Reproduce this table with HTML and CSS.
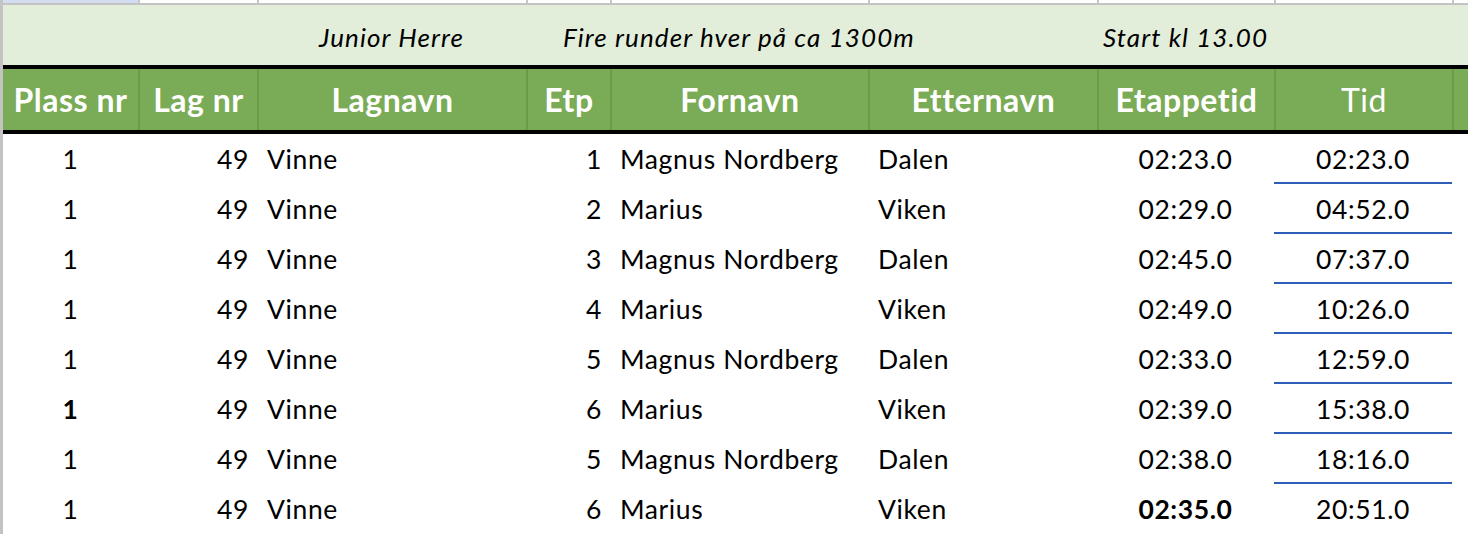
FILE: index.html
```html
<!DOCTYPE html>
<html lang="no">
<head>
<meta charset="utf-8">
<title>Junior Herre</title>
<link rel="stylesheet" href="styles.css">
</head>
<body>
<div class="sheet">
  <div class="gutter"></div>
  <div class="main">
    <div class="row toprow">
      <div class="c sel"></div><div class="c"></div><div class="c"></div><div class="c"></div><div class="c"></div><div class="c"></div><div class="c"></div><div class="c"></div><div class="c"></div>
    </div>
    <div class="row titlerow">
      <div class="c"></div><div class="c"></div>
      <div class="c t">Junior Herre</div>
      <div class="c"></div>
      <div class="c t">Fire runder hver på ca 1300m</div>
      <div class="c"></div>
      <div class="c t">Start kl 13.00</div>
      <div class="c"></div><div class="c"></div>
    </div>
    <div class="row headrow">
      <div class="c">Plass nr</div>
      <div class="c">Lag nr</div>
      <div class="c">Lagnavn</div>
      <div class="c">Etp</div>
      <div class="c">Fornavn</div>
      <div class="c">Etternavn</div>
      <div class="c">Etappetid</div>
      <div class="c reg">Tid</div>
      <div class="c"></div>
    </div>
    <div class="body">
      <div class="row drow"><div class="c ctr">1</div><div class="c rt">49</div><div class="c lt">Vinne</div><div class="c rt">1</div><div class="c lt">Magnus Nordberg</div><div class="c lt">Dalen</div><div class="c ctr">02:23.0</div><div class="c ctr tid">02:23.0</div><div class="c"></div></div>
      <div class="row drow"><div class="c ctr">1</div><div class="c rt">49</div><div class="c lt">Vinne</div><div class="c rt">2</div><div class="c lt">Marius</div><div class="c lt">Viken</div><div class="c ctr">02:29.0</div><div class="c ctr tid">04:52.0</div><div class="c"></div></div>
      <div class="row drow"><div class="c ctr">1</div><div class="c rt">49</div><div class="c lt">Vinne</div><div class="c rt">3</div><div class="c lt">Magnus Nordberg</div><div class="c lt">Dalen</div><div class="c ctr">02:45.0</div><div class="c ctr tid">07:37.0</div><div class="c"></div></div>
      <div class="row drow"><div class="c ctr">1</div><div class="c rt">49</div><div class="c lt">Vinne</div><div class="c rt">4</div><div class="c lt">Marius</div><div class="c lt">Viken</div><div class="c ctr">02:49.0</div><div class="c ctr tid">10:26.0</div><div class="c"></div></div>
      <div class="row drow"><div class="c ctr">1</div><div class="c rt">49</div><div class="c lt">Vinne</div><div class="c rt">5</div><div class="c lt">Magnus Nordberg</div><div class="c lt">Dalen</div><div class="c ctr">02:33.0</div><div class="c ctr tid">12:59.0</div><div class="c"></div></div>
      <div class="row drow"><div class="c ctr b">1</div><div class="c rt">49</div><div class="c lt">Vinne</div><div class="c rt">6</div><div class="c lt">Marius</div><div class="c lt">Viken</div><div class="c ctr">02:39.0</div><div class="c ctr tid">15:38.0</div><div class="c"></div></div>
      <div class="row drow"><div class="c ctr">1</div><div class="c rt">49</div><div class="c lt">Vinne</div><div class="c rt">5</div><div class="c lt">Magnus Nordberg</div><div class="c lt">Dalen</div><div class="c ctr">02:38.0</div><div class="c ctr tid">18:16.0</div><div class="c"></div></div>
      <div class="row drow"><div class="c ctr">1</div><div class="c rt">49</div><div class="c lt">Vinne</div><div class="c rt">6</div><div class="c lt">Marius</div><div class="c lt">Viken</div><div class="c ctr b">02:35.0</div><div class="c ctr">20:51.0</div><div class="c"></div></div>
    </div>
  </div>
</div>
</body>
</html>
```

FILE: styles.css
```css
html, body {
  margin: 0;
  padding: 0;
  background: #ffffff;
}

body {
  font-family: Lato, "Open Sans", sans-serif;
  color: #000;
  overflow: hidden;
}

.sheet {
  display: flex;
  height: 534px;
}

.gutter {
  width: 3px;
  flex: none;
  background: #c3c3c3;
}

.main {
  flex: 1;
  display: flex;
  flex-direction: column;
}

.row {
  display: grid;
  grid-template-columns: 135px 119px 269px 84px 258px 229px 177px 178px 1fr;
}

.c {
  box-sizing: border-box;
  min-width: 0;
  white-space: nowrap;
}

/* top (partial) spreadsheet row */
.toprow {
  height: 3px;
  border-bottom: 2px solid #c3c3c3;
}
.toprow .c + .c {
  border-left: 2px solid #c6c6c6;
}
.toprow .sel {
  background: #d3dcf1;
}

/* title row */
.titlerow {
  height: 61px;
  background: #e2eeda;
  border-bottom: 4px solid #000;
}
.titlerow .t {
  display: flex;
  justify-content: center;
  align-items: center;
  overflow: visible;
  font-style: italic;
  font-size: 26px;
  letter-spacing: 1.1px;
  padding-top: 3px;
}

/* header row */
.headrow {
  height: 61px;
  background: #7aab56;
  border-bottom: 4px solid #000;
  color: #fff;
  font-weight: 700;
  font-size: 32px;
  letter-spacing: 0.5px;
}
.headrow .c {
  display: flex;
  justify-content: center;
  align-items: center;
}
.headrow .c + .c {
  border-left: 2px solid #6b9a48;
}
.headrow .reg {
  font-weight: 400;
}

/* data rows */
.drow {
  height: 50px;
  font-size: 26.5px;
  letter-spacing: 0.6px;
}
.drow .c {
  display: flex;
  align-items: center;
}
.drow .ctr { justify-content: center; }
.drow .rt { justify-content: flex-end; padding-right: 8px; }
.drow .lt { justify-content: flex-start; padding-left: 10px; }
.drow .b { font-weight: 700; }
.drow .tid {
  border-bottom: 2px solid #2f5eb7;
  padding-top: 2px;
}
```
